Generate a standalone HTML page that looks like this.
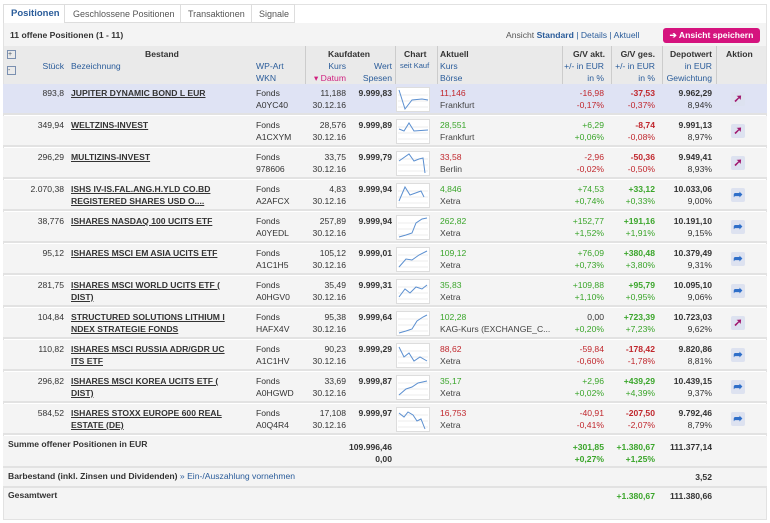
<!DOCTYPE html><html><head><meta charset="utf-8"><style>
*{margin:0;padding:0;box-sizing:border-box}
body{width:770px;height:523px;background:#fff;font-family:"Liberation Sans",Arial,sans-serif;font-size:8.6px;color:#333;position:relative;overflow:hidden}
.a{position:absolute;white-space:nowrap;line-height:12px}
.r{text-align:right}
.b{font-weight:bold}
.bl{color:#2a5c9a}.pk{color:#d0207f}
.red{color:#c0272d}.grn{color:#3aa52a}
.u{text-decoration:underline;font-weight:bold;color:#333}
.row{position:absolute;left:3px;width:764px;height:31px;background:#f4f4f4;border-bottom:2px solid #e2e2e2}
.ic{position:absolute;left:731px;width:14px;height:14px;background:#dde2f0;border-radius:2px;font-size:11px;text-align:center;line-height:14px;font-weight:bold}
.ic.pk{color:#a0186e}
</style></head><body>
<div class="a" style="left:3px;top:4px;width:764px;height:516px;border:1px solid #e2e2e2"></div>
<div class="a" style="left:3px;top:4px;width:62px;height:19px;background:#fff;border:1px solid #ddd;border-bottom:none"></div>
<div class="a b bl" style="left:11px;top:8px;font-size:9.5px">Positionen</div>
<div class="a" style="left:65px;top:4px;width:116px;height:19px;border:1px solid #ddd;border-left:none"></div>
<div class="a" style="left:73px;top:8px;color:#555;font-size:9px">Geschlossene Positionen</div>
<div class="a" style="left:181px;top:4px;width:71px;height:19px;border:1px solid #ddd;border-left:none"></div>
<div class="a" style="left:188px;top:8px;color:#555;font-size:9px">Transaktionen</div>
<div class="a" style="left:252px;top:4px;width:43px;height:19px;border:1px solid #ddd;border-left:none"></div>
<div class="a" style="left:259px;top:8px;color:#555;font-size:9px">Signale</div>
<div class="a" style="left:4px;top:23px;width:762px;height:23px;background:#f4f4f4"></div>
<div class="a b" style="left:10px;top:29px">11 offene Positionen (1 - 11)</div>
<div class="a" style="left:506px;top:29px;color:#555">Ansicht <b class="bl">Standard</b> <span class="bl">| Details | Aktuell</span></div>
<div class="a b" style="left:663px;top:28px;width:97px;height:15px;background:#d5137e;color:#fff;border-radius:3px;text-align:center;line-height:15px">➔ Ansicht speichern</div>
<div class="a" style="left:4px;top:46px;width:762px;height:38px;background:#eaeaea"></div>
<div class="a" style="left:305px;top:46px;width:1px;height:38px;background:#ccc"></div>
<div class="a" style="left:395px;top:46px;width:1px;height:38px;background:#ccc"></div>
<div class="a" style="left:437px;top:46px;width:1px;height:38px;background:#ccc"></div>
<div class="a" style="left:562px;top:46px;width:1px;height:38px;background:#ccc"></div>
<div class="a" style="left:611px;top:46px;width:1px;height:38px;background:#ccc"></div>
<div class="a" style="left:662px;top:46px;width:1px;height:38px;background:#ccc"></div>
<div class="a" style="left:716px;top:46px;width:1px;height:38px;background:#ccc"></div>
<div class="a" style="left:7px;top:50px;width:9px;height:9px;border:1px solid #7a8fb0;font-size:7px;line-height:7px;color:#456">+</div>
<div class="a" style="left:7px;top:66px;width:9px;height:9px;border:1px solid #7a8fb0;font-size:7px;line-height:7px;color:#456">-</div>
<div class="a b" style="left:145px;top:48px">Bestand</div>
<div class="a b" style="left:328px;top:48px">Kaufdaten</div>
<div class="a b" style="left:404px;top:48px">Chart</div>
<div class="a b" style="left:440px;top:48px">Aktuell</div>
<div class="a b r" style="left:565px;top:48px;width:40px">G/V akt.</div>
<div class="a b r" style="left:612px;top:48px;width:43px">G/V ges.</div>
<div class="a b r" style="left:663px;top:48px;width:49px">Depotwert</div>
<div class="a b" style="left:726px;top:48px">Aktion</div>
<div class="a bl r" style="left:30px;top:60px;width:34px">Stück</div>
<div class="a bl" style="left:71px;top:60px">Bezeichnung</div>
<div class="a bl" style="left:256px;top:60px">WP-Art<br>WKN</div>
<div class="a bl r" style="left:310px;top:60px;width:36px">Kurs<br><span class="pk">▾ Datum</span></div>
<div class="a bl r" style="left:350px;top:60px;width:42px">Wert<br>Spesen</div>
<div class="a bl" style="left:400px;top:60px;font-size:7.5px">seit Kauf</div>
<div class="a bl" style="left:440px;top:60px">Kurs<br>Börse</div>
<div class="a bl r" style="left:560px;top:60px;width:44px">+/- in EUR<br>in %</div>
<div class="a bl r" style="left:610px;top:60px;width:45px">+/- in EUR<br>in %</div>
<div class="a bl r" style="left:663px;top:60px;width:49px">in EUR<br>Gewichtung</div>

<div class="row" style="top:84px;background:#dfe3f4"></div>
<div class="row" style="top:116px"></div>
<div class="row" style="top:148px"></div>
<div class="row" style="top:180px"></div>
<div class="row" style="top:212px"></div>
<div class="row" style="top:244px"></div>
<div class="row" style="top:276px"></div>
<div class="row" style="top:308px"></div>
<div class="row" style="top:340px"></div>
<div class="row" style="top:372px"></div>
<div class="row" style="top:404px"></div>

<div class="a r" style="left:20px;top:87px;width:44px">893,8</div>
<div class="a u" style="left:71px;top:87px">JUPITER DYNAMIC BOND L EUR</div>
<div class="a" style="left:256px;top:87px">Fonds<br>A0YC40</div>
<div class="a r" style="left:300px;top:87px;width:46px">11,188<br>30.12.16</div>
<div class="a r b" style="left:346px;top:87px;width:46px">9.999,83</div>
<div class="a red" style="left:440px;top:87px">11,146<br><span style="color:#444">Frankfurt</span></div>
<div class="a r red" style="left:560px;top:87px;width:44px">-16,98<br>-0,17%</div>
<div class="a r red" style="left:610px;top:87px;width:45px"><b>-37,53</b><br>-0,37%</div>
<div class="a r" style="left:660px;top:87px;width:52px"><b>9.962,29</b><br>8,94%</div>

<div class="a r" style="left:20px;top:119px;width:44px">349,94</div>
<div class="a u" style="left:71px;top:119px">WELTZINS-INVEST</div>
<div class="a" style="left:256px;top:119px">Fonds<br>A1CXYM</div>
<div class="a r" style="left:300px;top:119px;width:46px">28,576<br>30.12.16</div>
<div class="a r b" style="left:346px;top:119px;width:46px">9.999,89</div>
<div class="a grn" style="left:440px;top:119px">28,551<br><span style="color:#444">Frankfurt</span></div>
<div class="a r grn" style="left:560px;top:119px;width:44px">+6,29<br>+0,06%</div>
<div class="a r red" style="left:610px;top:119px;width:45px"><b>-8,74</b><br>-0,08%</div>
<div class="a r" style="left:660px;top:119px;width:52px"><b>9.991,13</b><br>8,97%</div>

<div class="a r" style="left:20px;top:151px;width:44px">296,29</div>
<div class="a u" style="left:71px;top:151px">MULTIZINS-INVEST</div>
<div class="a" style="left:256px;top:151px">Fonds<br>978606</div>
<div class="a r" style="left:300px;top:151px;width:46px">33,75<br>30.12.16</div>
<div class="a r b" style="left:346px;top:151px;width:46px">9.999,79</div>
<div class="a red" style="left:440px;top:151px">33,58<br><span style="color:#444">Berlin</span></div>
<div class="a r red" style="left:560px;top:151px;width:44px">-2,96<br>-0,02%</div>
<div class="a r red" style="left:610px;top:151px;width:45px"><b>-50,36</b><br>-0,50%</div>
<div class="a r" style="left:660px;top:151px;width:52px"><b>9.949,41</b><br>8,93%</div>

<div class="a r" style="left:10px;top:183px;width:54px">2.070,38</div>
<div class="a u" style="left:71px;top:183px">ISHS IV-IS.FAL.ANG.H.YLD CO.BD<br>REGISTERED SHARES USD O....</div>
<div class="a" style="left:256px;top:183px">Fonds<br>A2AFCX</div>
<div class="a r" style="left:300px;top:183px;width:46px">4,83<br>30.12.16</div>
<div class="a r b" style="left:346px;top:183px;width:46px">9.999,94</div>
<div class="a grn" style="left:440px;top:183px">4,846<br><span style="color:#444">Xetra</span></div>
<div class="a r grn" style="left:560px;top:183px;width:44px">+74,53<br>+0,74%</div>
<div class="a r grn" style="left:610px;top:183px;width:45px"><b>+33,12</b><br>+0,33%</div>
<div class="a r" style="left:660px;top:183px;width:52px"><b>10.033,06</b><br>9,00%</div>

<div class="a r" style="left:20px;top:215px;width:44px">38,776</div>
<div class="a u" style="left:71px;top:215px">ISHARES NASDAQ 100 UCITS ETF</div>
<div class="a" style="left:256px;top:215px">Fonds<br>A0YEDL</div>
<div class="a r" style="left:300px;top:215px;width:46px">257,89<br>30.12.16</div>
<div class="a r b" style="left:346px;top:215px;width:46px">9.999,94</div>
<div class="a grn" style="left:440px;top:215px">262,82<br><span style="color:#444">Xetra</span></div>
<div class="a r grn" style="left:560px;top:215px;width:44px">+152,77<br>+1,52%</div>
<div class="a r grn" style="left:610px;top:215px;width:45px"><b>+191,16</b><br>+1,91%</div>
<div class="a r" style="left:660px;top:215px;width:52px"><b>10.191,10</b><br>9,15%</div>

<div class="a r" style="left:20px;top:247px;width:44px">95,12</div>
<div class="a u" style="left:71px;top:247px">ISHARES MSCI EM ASIA UCITS ETF</div>
<div class="a" style="left:256px;top:247px">Fonds<br>A1C1H5</div>
<div class="a r" style="left:300px;top:247px;width:46px">105,12<br>30.12.16</div>
<div class="a r b" style="left:346px;top:247px;width:46px">9.999,01</div>
<div class="a grn" style="left:440px;top:247px">109,12<br><span style="color:#444">Xetra</span></div>
<div class="a r grn" style="left:560px;top:247px;width:44px">+76,09<br>+0,73%</div>
<div class="a r grn" style="left:610px;top:247px;width:45px"><b>+380,48</b><br>+3,80%</div>
<div class="a r" style="left:660px;top:247px;width:52px"><b>10.379,49</b><br>9,31%</div>

<div class="a r" style="left:20px;top:279px;width:44px">281,75</div>
<div class="a u" style="left:71px;top:279px">ISHARES MSCI WORLD UCITS ETF (<br>DIST)</div>
<div class="a" style="left:256px;top:279px">Fonds<br>A0HGV0</div>
<div class="a r" style="left:300px;top:279px;width:46px">35,49<br>30.12.16</div>
<div class="a r b" style="left:346px;top:279px;width:46px">9.999,31</div>
<div class="a grn" style="left:440px;top:279px">35,83<br><span style="color:#444">Xetra</span></div>
<div class="a r grn" style="left:560px;top:279px;width:44px">+109,88<br>+1,10%</div>
<div class="a r grn" style="left:610px;top:279px;width:45px"><b>+95,79</b><br>+0,95%</div>
<div class="a r" style="left:660px;top:279px;width:52px"><b>10.095,10</b><br>9,06%</div>

<div class="a r" style="left:20px;top:311px;width:44px">104,84</div>
<div class="a u" style="left:71px;top:311px">STRUCTURED SOLUTIONS LITHIUM I<br>NDEX STRATEGIE FONDS</div>
<div class="a" style="left:256px;top:311px">Fonds<br>HAFX4V</div>
<div class="a r" style="left:300px;top:311px;width:46px">95,38<br>30.12.16</div>
<div class="a r b" style="left:346px;top:311px;width:46px">9.999,64</div>
<div class="a grn" style="left:440px;top:311px">102,28<br><span style="color:#444">KAG-Kurs (EXCHANGE_C...</span></div>
<div class="a r" style="left:560px;top:311px;width:44px">0,00<br><span class="grn">+0,20%</span></div>
<div class="a r grn" style="left:610px;top:311px;width:45px"><b>+723,39</b><br>+7,23%</div>
<div class="a r" style="left:660px;top:311px;width:52px"><b>10.723,03</b><br>9,62%</div>

<div class="a r" style="left:20px;top:343px;width:44px">110,82</div>
<div class="a u" style="left:71px;top:343px">ISHARES MSCI RUSSIA ADR/GDR UC<br>ITS ETF</div>
<div class="a" style="left:256px;top:343px">Fonds<br>A1C1HV</div>
<div class="a r" style="left:300px;top:343px;width:46px">90,23<br>30.12.16</div>
<div class="a r b" style="left:346px;top:343px;width:46px">9.999,29</div>
<div class="a red" style="left:440px;top:343px">88,62<br><span style="color:#444">Xetra</span></div>
<div class="a r red" style="left:560px;top:343px;width:44px">-59,84<br>-0,60%</div>
<div class="a r red" style="left:610px;top:343px;width:45px"><b>-178,42</b><br>-1,78%</div>
<div class="a r" style="left:660px;top:343px;width:52px"><b>9.820,86</b><br>8,81%</div>

<div class="a r" style="left:20px;top:375px;width:44px">296,82</div>
<div class="a u" style="left:71px;top:375px">ISHARES MSCI KOREA UCITS ETF (<br>DIST)</div>
<div class="a" style="left:256px;top:375px">Fonds<br>A0HGWD</div>
<div class="a r" style="left:300px;top:375px;width:46px">33,69<br>30.12.16</div>
<div class="a r b" style="left:346px;top:375px;width:46px">9.999,87</div>
<div class="a grn" style="left:440px;top:375px">35,17<br><span style="color:#444">Xetra</span></div>
<div class="a r grn" style="left:560px;top:375px;width:44px">+2,96<br>+0,02%</div>
<div class="a r grn" style="left:610px;top:375px;width:45px"><b>+439,29</b><br>+4,39%</div>
<div class="a r" style="left:660px;top:375px;width:52px"><b>10.439,15</b><br>9,37%</div>

<div class="a r" style="left:20px;top:407px;width:44px">584,52</div>
<div class="a u" style="left:71px;top:407px">ISHARES STOXX EUROPE 600 REAL<br>ESTATE (DE)</div>
<div class="a" style="left:256px;top:407px">Fonds<br>A0Q4R4</div>
<div class="a r" style="left:300px;top:407px;width:46px">17,108<br>30.12.16</div>
<div class="a r b" style="left:346px;top:407px;width:46px">9.999,97</div>
<div class="a red" style="left:440px;top:407px">16,753<br><span style="color:#444">Xetra</span></div>
<div class="a r red" style="left:560px;top:407px;width:44px">-40,91<br>-0,41%</div>
<div class="a r red" style="left:610px;top:407px;width:45px"><b>-207,50</b><br>-2,07%</div>
<div class="a r" style="left:660px;top:407px;width:52px"><b>9.792,46</b><br>8,79%</div>

<svg class="a" style="left:396px;top:87px" width="34" height="25"><rect x=".5" y=".5" width="33" height="24" fill="#fff" stroke="#ddd"/><path d="M2 8H32M2 14H32M2 20H32" stroke="#eee"/><polyline points="3,3 9,22 16,13 26,12 32,13" fill="none" stroke="#5b8fd0"/></svg>
<svg class="a" style="left:396px;top:119px" width="34" height="25"><rect x=".5" y=".5" width="33" height="24" fill="#fff" stroke="#ddd"/><path d="M2 8H32M2 14H32M2 20H32" stroke="#eee"/><polyline points="3,10 8,12 13,4 18,12 32,11" fill="none" stroke="#5b8fd0"/></svg>
<svg class="a" style="left:396px;top:151px" width="34" height="25"><rect x=".5" y=".5" width="33" height="24" fill="#fff" stroke="#ddd"/><path d="M2 8H32M2 14H32M2 20H32" stroke="#eee"/><polyline points="3,10 13,3 18,10 23,8 27,7 29,22" fill="none" stroke="#5b8fd0"/></svg>
<svg class="a" style="left:396px;top:183px" width="34" height="25"><rect x=".5" y=".5" width="33" height="24" fill="#fff" stroke="#ddd"/><path d="M2 8H32M2 14H32M2 20H32" stroke="#eee"/><polyline points="3,18 9,4 14,12 25,8 28,14" fill="none" stroke="#5b8fd0"/></svg>
<svg class="a" style="left:396px;top:215px" width="34" height="25"><rect x=".5" y=".5" width="33" height="24" fill="#fff" stroke="#ddd"/><path d="M2 8H32M2 14H32M2 20H32" stroke="#eee"/><polyline points="3,22 10,20 16,18 20,8 26,4 31,3" fill="none" stroke="#5b8fd0"/></svg>
<svg class="a" style="left:396px;top:247px" width="34" height="25"><rect x=".5" y=".5" width="33" height="24" fill="#fff" stroke="#ddd"/><path d="M2 8H32M2 14H32M2 20H32" stroke="#eee"/><polyline points="3,20 10,12 16,13 23,8 31,4" fill="none" stroke="#5b8fd0"/></svg>
<svg class="a" style="left:396px;top:279px" width="34" height="25"><rect x=".5" y=".5" width="33" height="24" fill="#fff" stroke="#ddd"/><path d="M2 8H32M2 14H32M2 20H32" stroke="#eee"/><polyline points="3,18 9,10 14,14 20,8 26,10 31,6" fill="none" stroke="#5b8fd0"/></svg>
<svg class="a" style="left:396px;top:311px" width="34" height="25"><rect x=".5" y=".5" width="33" height="24" fill="#fff" stroke="#ddd"/><path d="M2 8H32M2 14H32M2 20H32" stroke="#eee"/><polyline points="3,22 10,20 16,18 21,10 27,6 31,4" fill="none" stroke="#5b8fd0"/></svg>
<svg class="a" style="left:396px;top:343px" width="34" height="25"><rect x=".5" y=".5" width="33" height="24" fill="#fff" stroke="#ddd"/><path d="M2 8H32M2 14H32M2 20H32" stroke="#eee"/><polyline points="3,4 8,14 13,10 18,18 24,14 31,18" fill="none" stroke="#5b8fd0"/></svg>
<svg class="a" style="left:396px;top:375px" width="34" height="25"><rect x=".5" y=".5" width="33" height="24" fill="#fff" stroke="#ddd"/><path d="M2 8H32M2 14H32M2 20H32" stroke="#eee"/><polyline points="3,20 10,14 16,12 22,8 31,6" fill="none" stroke="#5b8fd0"/></svg>
<svg class="a" style="left:396px;top:407px" width="34" height="25"><rect x=".5" y=".5" width="33" height="24" fill="#fff" stroke="#ddd"/><path d="M2 8H32M2 14H32M2 20H32" stroke="#eee"/><polyline points="3,6 8,10 12,5 17,8 21,14 25,12 29,22" fill="none" stroke="#5b8fd0"/></svg>

<div class="ic pk" style="top:92px">➚</div>
<div class="ic pk" style="top:124px">➚</div>
<div class="ic pk" style="top:156px">➚</div>
<div class="ic" style="top:188px;color:#2f6fc9">➦</div>
<div class="ic" style="top:220px;color:#2f6fc9">➦</div>
<div class="ic" style="top:252px;color:#2f6fc9">➦</div>
<div class="ic" style="top:284px;color:#2f6fc9">➦</div>
<div class="ic pk" style="top:316px">➚</div>
<div class="ic" style="top:348px;color:#2f6fc9">➦</div>
<div class="ic" style="top:380px;color:#2f6fc9">➦</div>
<div class="ic" style="top:412px;color:#2f6fc9">➦</div>

<div class="row" style="top:436px;height:32px"></div>
<div class="a b" style="left:8px;top:438px">Summe offener Positionen in EUR</div>
<div class="a r b" style="left:300px;top:441px;width:92px">109.996,46<br>0,00</div>
<div class="a r b grn" style="left:560px;top:441px;width:44px">+301,85<br>+0,27%</div>
<div class="a r b grn" style="left:610px;top:441px;width:45px">+1.380,67<br>+1,25%</div>
<div class="a r b" style="left:660px;top:441px;width:52px">111.377,14</div>
<div class="row" style="top:468px;height:20px"></div>
<div class="a" style="left:8px;top:470px"><b>Barbestand (inkl. Zinsen und Dividenden)</b> <span class="bl">» Ein-/Auszahlung vornehmen</span></div>
<div class="a r b" style="left:660px;top:471px;width:52px">3,52</div>
<div class="a" style="left:4px;top:488px;width:762px;height:31px;background:#f4f4f4"></div>
<div class="a b" style="left:8px;top:489px">Gesamtwert</div>
<div class="a r b grn" style="left:610px;top:490px;width:45px">+1.380,67</div>
<div class="a r b" style="left:660px;top:490px;width:52px">111.380,66</div>
</body></html>
